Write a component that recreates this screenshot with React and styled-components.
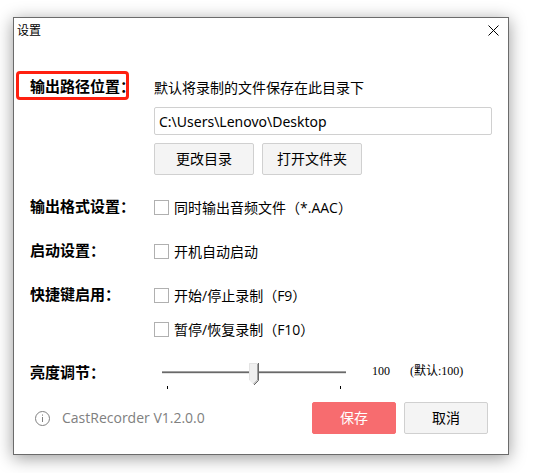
import React, { useState } from 'react'
import styled, { createGlobalStyle } from 'styled-components'

function CheckOption({ children }) {
    return (
        <Option>
            <input type="checkbox" />
            <span>{children}</span>
        </Option>
    )
}

export default function App() {
    const [path, setPath] = useState('C:\\Users\\Lenovo\\Desktop')
    const [brightness, setBrightness] = useState(100)

    return (
        <>
            <GlobalStyle />
            <Dialog>
                <TitleBar>
                    <Title>设置</Title>
                    <CloseButton type="button" aria-label="关闭">
                        <svg width="11" height="11" viewBox="0 0 11 11" stroke="#000" strokeWidth="1">
                            <path d="M0.5 0.5L10.5 10.5M10.5 0.5L0.5 10.5" />
                        </svg>
                    </CloseButton>
                </TitleBar>

                <Settings>
                    <Row>
                        <RowLabel as="label" htmlFor="path" $marked>输出路径位置：</RowLabel>
                        <PathFields>
                            <Hint>默认将录制的文件保存在此目录下</Hint>
                            <PathInput id="path" type="text" value={path} onChange={e => setPath(e.target.value)} />
                            <Buttons>
                                <Button type="button" $width={100}>更改目录</Button>
                                <Button type="button" $width={100}>打开文件夹</Button>
                            </Buttons>
                        </PathFields>
                    </Row>
                    <Row>
                        <RowLabel>输出格式设置：</RowLabel>
                        <CheckOption>同时输出音频文件（*.AAC）</CheckOption>
                    </Row>
                    <Row>
                        <RowLabel>启动设置：</RowLabel>
                        <CheckOption>开机自动启动</CheckOption>
                    </Row>
                    <Row>
                        <RowLabel>快捷键启用：</RowLabel>
                        <Options>
                            <CheckOption>开始/停止录制（F9）</CheckOption>
                            <CheckOption>暂停/恢复录制（F10）</CheckOption>
                        </Options>
                    </Row>
                    <Row>
                        <RowLabel as="label" htmlFor="brightness">亮度调节：</RowLabel>
                        <Brightness>
                            <SliderBox>
                                <Slider
                                    id="brightness"
                                    type="range"
                                    min="0"
                                    max="200"
                                    value={brightness}
                                    onChange={e => setBrightness(e.target.value)}
                                />
                                <Ticks />
                            </SliderBox>
                            <SmallText>{brightness}</SmallText>
                            <SmallText>(默认:100)</SmallText>
                        </Brightness>
                    </Row>
                </Settings>

                <Footer>
                    <Version>
                        <svg width="15" height="15" viewBox="0 0 15 15" fill="none" stroke="#808080">
                            <circle cx="7.5" cy="7.5" r="7" />
                            <path d="M7.5 6v5M7.5 3.5v1.2" />
                        </svg>
                        CastRecorder V1.2.0.0
                    </Version>
                    <Buttons>
                        <Button type="submit" $width={84} $primary>保存</Button>
                        <Button type="button" $width={84}>取消</Button>
                    </Buttons>
                </Footer>
            </Dialog>
        </>
    )
}

const GlobalStyle = createGlobalStyle`
    *, *::before, *::after {
        box-sizing: border-box;
    }
    body {
        margin: 0;
        background: #fff;
        color: #000;
        font-family: "Open Sans", "Noto Sans CJK SC", sans-serif;
        font-size: 14px;
        line-height: 22px;
    }
    input, button {
        font: inherit;
        color: inherit;
    }
`

const Dialog = styled.form`
    margin: 17px 26px 18px 13px;
    background: #fff;
    border: 1px solid #6b6b6b;
    box-shadow: 0 3px 16px rgba(0, 0, 0, 0.4);
`

const TitleBar = styled.header`
    display: flex;
    align-items: center;
    justify-content: space-between;
    height: 25px;
    padding: 0 9px 0 3px;
`

const Title = styled.h1`
    margin: 0;
    font-size: 12px;
    font-weight: 400;
`

const CloseButton = styled.button`
    display: flex;
    padding: 0;
    border: 0;
    background: none;
`

const Settings = styled.div`
    display: flex;
    flex-direction: column;
    gap: 22px;
    padding: 34px 16px 0;
`

const Row = styled.div`
    display: grid;
    grid-template-columns: 124px 1fr;
    align-items: start;
`

const RowLabel = styled.span`
    position: relative;
    font-size: 15px;
    font-weight: 700;
    line-height: 18px;
    white-space: nowrap;

    &::after {
        content: "";
        display: ${props => props.$marked ? 'block' : 'none'};
        position: absolute;
        top: -6px;
        left: -14px;
        width: 113px;
        height: 29px;
        border: 3px solid #ff2010;
        border-radius: 4px;
    }
`

const PathFields = styled.div`
    display: flex;
    flex-direction: column;
    gap: 8px;
`

const Hint = styled.p`
    margin: 0;
`

const PathInput = styled.input`
    width: 100%;
    height: 28px;
    padding: 0 4px;
    font-family: "Noto Sans", "Noto Sans CJK SC", sans-serif;
    background: #fff;
    border: 1px solid #d0d0d0;
    border-radius: 2px;
    outline: none;
`

const Buttons = styled.div`
    display: flex;
    gap: 8px;
`

const Button = styled.button`
    width: ${props => props.$width}px;
    height: 32px;
    padding: 0;
    color: ${props => props.$primary ? '#fff' : '#000'};
    background: ${props => props.$primary ? '#f76c6f' : '#f4f4f4'};
    border: 1px solid ${props => props.$primary ? '#f76c6f' : '#d0d0d0'};
    border-radius: 2px;
`

const Options = styled.div`
    display: flex;
    flex-direction: column;
    gap: 12px;
`

const Option = styled.label`
    display: flex;
    align-items: flex-start;
    gap: 5px;

    input {
        appearance: none;
        width: 15px;
        height: 15px;
        margin: 3px 0 0;
        background: #fff;
        border: 1px solid #b0b0b0;
    }
    input:checked {
        background: #f76c6f;
    }
`

const Brightness = styled.div`
    display: flex;
    align-items: flex-start;
    padding-left: 8px;
`

const SliderBox = styled.div`
    width: 184px;
    margin-right: 26px;
`

const thumb = `<svg xmlns='http://www.w3.org/2000/svg' width='11' height='22'><path d='M0 0H10V17L5 22L0 17Z' fill='%23f0f0f0'/><path d='M0.5 17V0.5H9' fill='none' stroke='%23e3e3e3'/><path d='M8.5 1V17L4.5 21' fill='none' stroke='%23a0a0a0'/><path d='M9.5 0V17.5L5 22' fill='none' stroke='%23696969'/></svg>`

const Slider = styled.input`
    appearance: none;
    display: block;
    width: 100%;
    height: 22px;
    margin: 0;
    background: none;

    &::-webkit-slider-runnable-track {
        height: 22px;
        background: linear-gradient(#a0a0a0 0 1px, #696969 1px 2px, #e3e3e3 2px) 0 8px / 100% 3px no-repeat;
    }
    &::-webkit-slider-thumb {
        appearance: none;
        width: 10px;
        height: 22px;
        background: url("data:image/svg+xml,${thumb}") no-repeat;
    }
`

const Ticks = styled.div`
    height: 3px;
    margin: 1px 5px 0;
    border: solid #000;
    border-width: 0 1px;
`

const SmallText = styled.span`
    margin-right: 20px;
    font-family: "Liberation Serif", "Noto Sans CJK SC", serif;
    font-size: 12px;
    line-height: 16px;
`

const Footer = styled.footer`
    display: flex;
    align-items: center;
    justify-content: space-between;
    padding: 13px 20px 20px 21px;
`

const Version = styled.div`
    display: flex;
    align-items: center;
    gap: 12px;
    color: #808080;
`
